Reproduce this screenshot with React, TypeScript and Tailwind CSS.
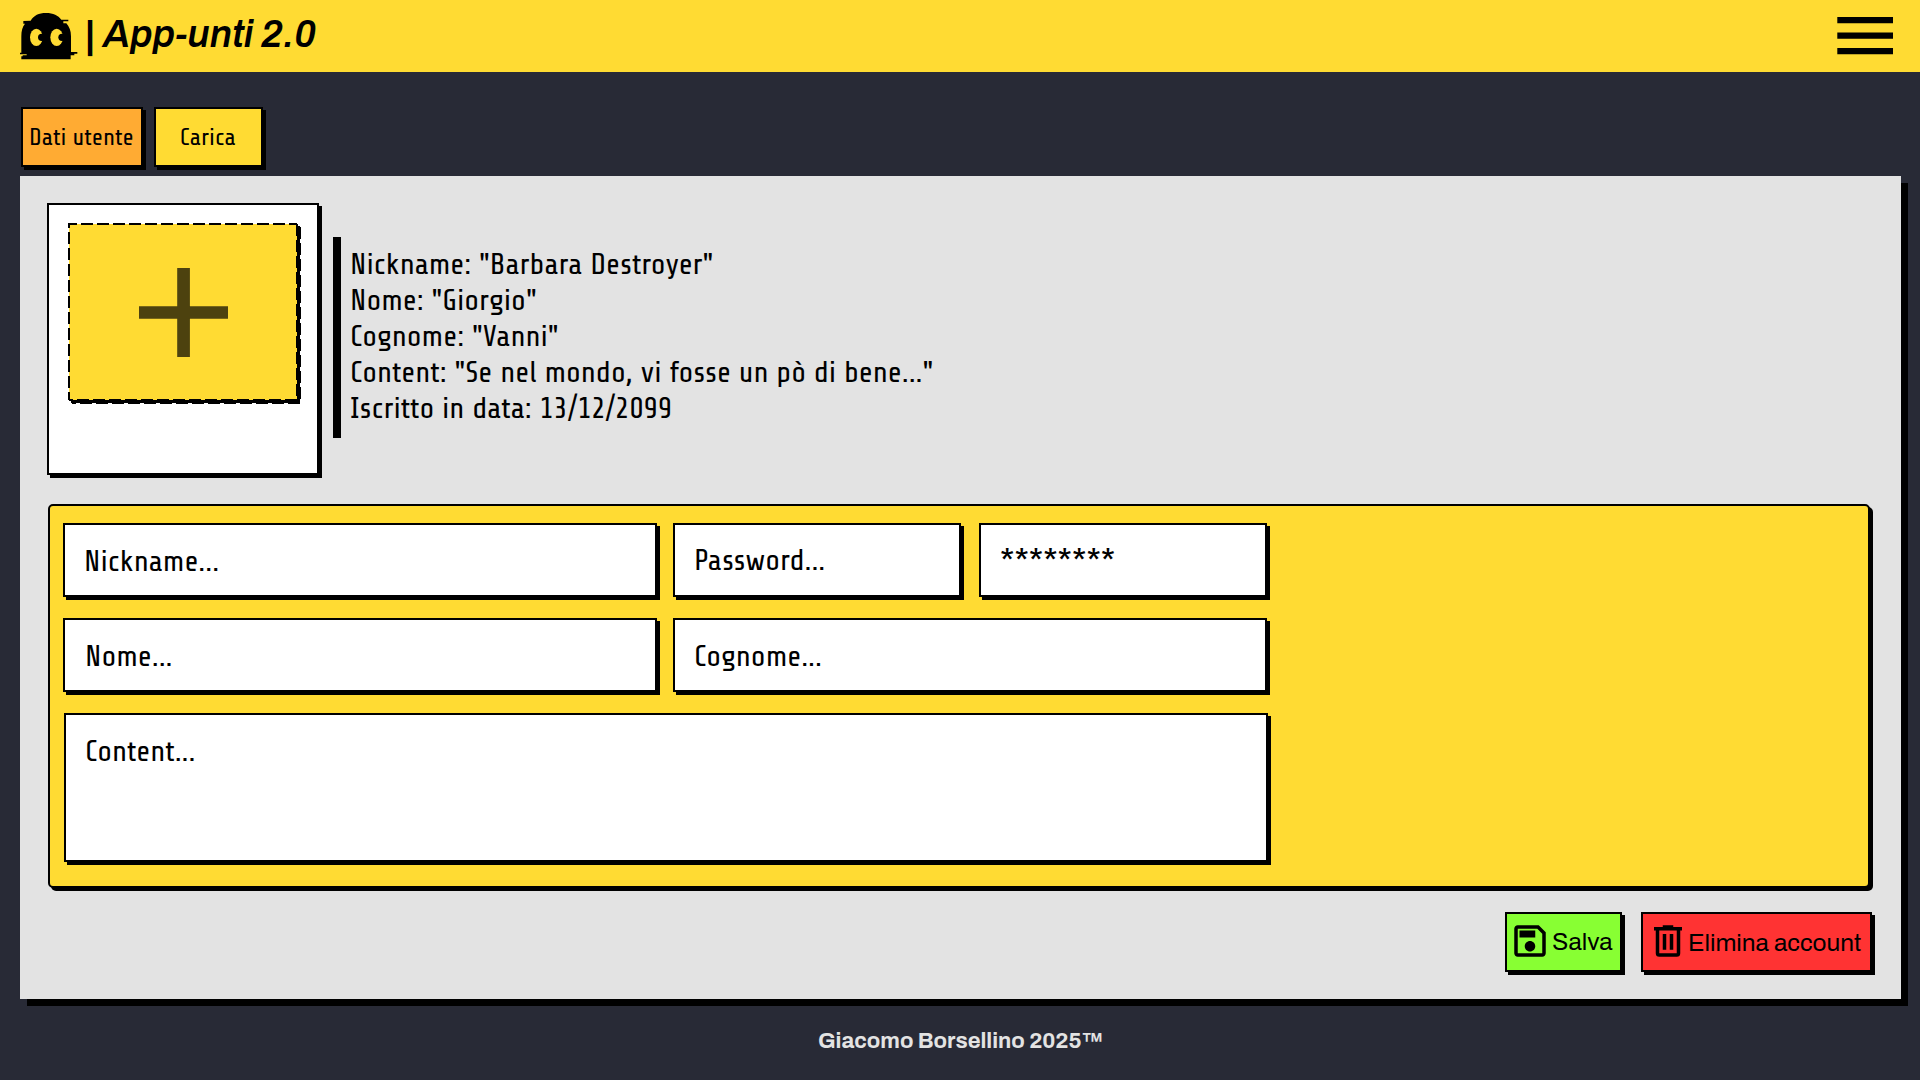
import type { ReactNode } from "react";

const box = "border-2 border-black shadow-[3px_3px_0_#000]";

function GhostLogo() {
  return (
    <svg className="h-14 w-16 shrink-0" viewBox="0 0 192 168">
      <path d="M44 38C54 22 68 15 90 15C112 15 126 22 136 35H157V40H142V46H151C160 57 165 68 165 85V132H184V137H175V142H164V154H16V145H20V142H32V139H12V134H16V85C16 68 19 57 27 47H22V39Z" />
      <ellipse cx="61" cy="88" rx="19" ry="26" fill="#ffdb33" />
      <circle cx="77" cy="88" r="11" />
      <ellipse cx="122" cy="88" rx="19" ry="26" fill="#ffdb33" />
      <circle cx="138" cy="88" r="11" />
    </svg>
  );
}

function MenuIcon() {
  return (
    <svg className="h-[38px] w-14" viewBox="0 0 56 38">
      <path d="M.3 0H56V6.3H.3ZM.3 15.4H56V21.7H.3ZM.3 31H56V37.3H.3Z" />
    </svg>
  );
}

function Dropzone() {
  return (
    <svg
      className="h-[178px] w-[230px] overflow-visible drop-shadow-[3px_3px_0_#000]"
      viewBox="0 0 230 178"
    >
      <rect x="1" y="1" width="228" height="176" fill="#ffdb33" />
      <g stroke="#000" strokeWidth="2" strokeDasharray="12 4" fill="none">
        <path d="M0 1H229" strokeDashoffset="3" />
        <path d="M229 1V177" />
        <path d="M1 177H229" strokeDashoffset="8" />
        <path d="M1 1V177" strokeDashoffset="8" />
      </g>
      <path
        d="M109.2 45H121.9V83.2H160V95.8H121.9V134H109.2V95.8H71V83.2H109.2Z"
        fill="#4d420f"
      />
    </svg>
  );
}

function Tab({ className, children }: { className: string; children: ReactNode }) {
  return (
    <button
      className={`${box} h-[60px] pr-[1.4px] text-center font-['Share_Tech','Roboto',sans-serif] text-[24px] leading-[27px] whitespace-nowrap ${className}`}
    >
      {children}
    </button>
  );
}

function Field({ className, children }: { className: string; children: ReactNode }) {
  return <div className={`${box} bg-white leading-9 ${className}`}>{children}</div>;
}

const info = [
  'Nickname: "Barbara Destroyer"',
  'Nome: "Giorgio"',
  'Cognome: "Vanni"',
  'Content: "Se nel mondo, vi fosse un pò di bene..."',
  "Iscritto in data: 13/12/2099",
];

export default function App() {
  return (
    <div className="h-screen overflow-hidden bg-[#282a36] font-['Archivo','Liberation_Sans',sans-serif] text-black">
      <header className="flex h-[72px] items-start justify-between bg-[#ffdb33] pr-[27px] pl-4">
        <div className="flex items-start pt-2">
          <GhostLogo />
          <h1 className="flex pt-1.5 pl-[5px] text-[38px] leading-[41px] font-semibold whitespace-nowrap">
            <span className="w-[18px] pt-px font-extrabold">|</span>
            <em>App-unti 2.0</em>
          </h1>
        </div>
        <button className="pt-[17px]">
          <MenuIcon />
        </button>
      </header>

      <nav className="flex gap-[11px] pt-[35px] pl-[21px]">
        <Tab className="w-[122px] bg-[#ffab33]">Dati utente</Tab>
        <Tab className="w-[109px] bg-[#ffdb33]">Carica</Tab>
      </nav>

      <main className="mt-[9px] mr-[19px] ml-5 h-[823px] bg-[#e3e3e3] pt-[27px] pr-[29px] pl-[27px] font-['Share_Tech','Roboto',sans-serif] text-[30px] shadow-[7px_7px_0_#000]">
        <section className="flex h-[272px]">
          <div className={`${box} w-[272px] bg-white pt-[18px] pl-[19px]`}>
            <Dropzone />
          </div>
          <div className="mt-[34px] ml-[14.3px] h-[201px] w-[7.4px] bg-black" />
          <ul className="mt-[43px] ml-[9.3px] leading-9">
            {info.map((line) => (
              <li key={line}>{line}</li>
            ))}
          </ul>
        </section>

        <section className="mt-[29px] mr-0.5 ml-px flex h-[384px] flex-col gap-[21px] rounded-[5px] border-2 border-black bg-[#ffdb33] pt-[17px] pl-[13px] shadow-[3px_3px_0_#000]">
          <div className="flex h-[74px]">
            <Field className="w-[594px] pt-[18px] pl-[19px]">Nickname...</Field>
            <Field className="ml-4 w-[288px] pt-[17px] pl-[19px]">Password...</Field>
            <Field className="ml-[18px] w-[288px] pt-[17px] pl-[19px]">********</Field>
          </div>
          <div className="flex h-[74px] gap-4">
            <Field className="w-[594px] pt-[18px] pl-5">Nome...</Field>
            <Field className="w-[594px] pt-[18px] pl-[19px]">Cognome...</Field>
          </div>
          <Field className="ml-px h-[149px] w-[1204px] pt-[18px] pl-[19px]">Content...</Field>
        </section>

        <div className="mt-6 flex justify-end gap-[19px] font-['Archivo','Liberation_Sans',sans-serif] text-[24.4px] leading-[26px]">
          <button className={`${box} flex h-[60px] w-[117px] items-start bg-[#88ff33]`}>
            <svg className="mt-[5.75px] ml-[1.75px] size-[42px] shrink-0" viewBox="0 0 24 24">
              <path d="M17 3H5C3.89 3 3 3.9 3 5V19C3 20.1 3.89 21 5 21H19C20.1 21 21 20.1 21 19V7L17 3M19 19H5V5H16.17L19 7.83V19M12 12C10.34 12 9 13.34 9 15S10.34 18 12 18 15 16.66 15 15 13.66 12 12 12M6 6H15V10H6V6Z" />
            </svg>
            <span className="mt-[15px] ml-[1.35px]">Salva</span>
          </button>
          <button className={`${box} flex h-[60px] w-[231px] items-start bg-[#ff3333]`}>
            <svg className="mt-[6.4px] ml-[3.7px] size-[42px] shrink-0" viewBox="0 0 24 24">
              <path d="M9 3V4H4V6H5V19A2 2 0 0 0 7 21H17A2 2 0 0 0 19 19V6H20V4H15V3H9M7 6H17V19H7V6M9 8V17H11V8H9M13 8V17H15V8H13Z" />
            </svg>
            <span className="mt-4 -ml-[0.8px] whitespace-nowrap">Elimina account</span>
          </button>
        </div>
      </main>

      <footer className="mt-[30px] pl-[1.5px] text-center text-[22px] leading-6 font-bold text-[#e3e3e3]">
        Giacomo Borsellino 2025™
      </footer>
    </div>
  );
}
